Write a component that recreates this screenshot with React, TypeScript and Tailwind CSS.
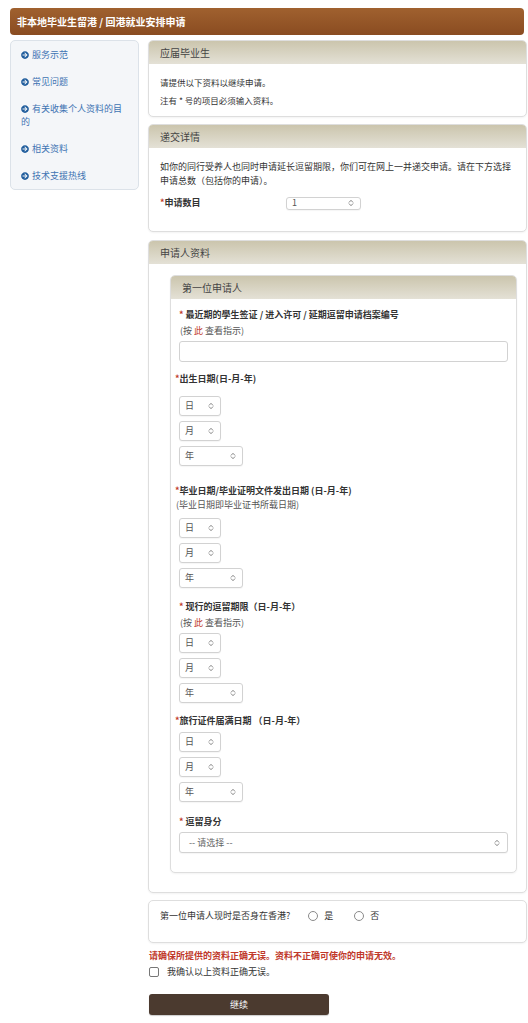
import type { ReactNode } from 'react';
import { FaArrowCircleRight } from 'react-icons/fa';

const sideLinks = ['服务示范', '常见问题', '有关收集个人资料的目的', '相关资料', '技术支援热线'];

function UpDown() {
  return (
    <svg width="6" height="8" viewBox="0 0 6 8" fill="none" stroke="#777" strokeWidth="0.9" strokeLinecap="round" strokeLinejoin="round">
      <path d="M1.2 3.2 L3 1.3 L4.8 3.2" />
      <path d="M1.2 4.8 L3 6.7 L4.8 4.8" />
    </svg>
  );
}

function SelectBox({ label, className }: { label: string; className: string }) {
  return (
    <div className={`flex items-center justify-between rounded-[3px] border border-[#d2d2d2] bg-white pl-[5px] pr-[6px] text-[9px] text-[#555] shadow-[0_1px_1px_rgba(0,0,0,0.04)] ${className}`}>
      <span>{label}</span>
      <UpDown />
    </div>
  );
}

function DateSelects({ className = '' }: { className?: string }) {
  return (
    <div className={`flex flex-col gap-[5px] ${className}`}>
      <SelectBox label="日" className="h-[20px] w-[42px]" />
      <SelectBox label="月" className="h-[20px] w-[42px]" />
      <SelectBox label="年" className="h-[20px] w-[64px]" />
    </div>
  );
}

function Panel({ title, children, className = '' }: { title?: string; children: ReactNode; className?: string }) {
  return (
    <section className={`rounded-[5px] border border-[#dedede] bg-white shadow-[0_1px_2px_rgba(0,0,0,0.05)] ${className}`}>
      {title && (
        <div className="flex h-[23px] items-center rounded-t-[4px] bg-linear-to-b from-[#cbc5ad] to-[#e4e1d6] px-[11px] text-[10px] text-[#444]">
          {title}
        </div>
      )}
      {children}
    </section>
  );
}

function Req() {
  return <span className="text-[#c0392b]">*</span>;
}

function Hint() {
  return (
    <p className="mt-[4px] pl-[1px] text-[9px] leading-[12px] text-[#555]">
      (按 <span className="text-[#c0392b]">此</span> 查看指示)
    </p>
  );
}

export default function App() {
  return (
    <div className="min-h-screen bg-white pl-[10px] pr-[1px] pt-[8px] pb-[8px] font-['Noto_Sans_CJK_SC','Noto_Sans',sans-serif] text-[#333]">
      {/* Kopfzeile */}
      <header className="flex h-[27px] w-[514px] items-center rounded-[4px] bg-linear-to-b from-[#a0612f] to-[#8a4c21] pl-[7px] text-[10px] font-bold text-white">
        非本地毕业生留港 / 回港就业安排申请
      </header>

      <div className="mt-[5px] flex gap-[9px]">
        {/* Seitenleiste */}
        <nav className="w-[129px] self-start rounded-[5px] border border-[#dce2e9] bg-[#f4f6f9] py-[7px] pl-[10px] pr-[12px]">
          <ul className="space-y-[14px]">
            {sideLinks.map((item) => (
              <li key={item} className="text-[9px] leading-[13px] text-[#3f74b3]">
                <FaArrowCircleRight size={8} className="mr-[3px] inline-block align-[-0.5px] text-[#1f5c9c]" />
                {item}
              </li>
            ))}
          </ul>
        </nav>

        <main className="flex flex-1 flex-col">
          <Panel title="应届毕业生">
            <div className="px-[11px] pt-[12px] pb-[10px] text-[8.5px] leading-[12px]">
              <p>请提供以下资料以继续申请。</p>
              <p className="mt-[6px]">注有 * 号的项目必须输入资料。</p>
            </div>
          </Panel>

          <Panel title="递交详情" className="mt-[7px]">
            <div className="px-[11px] pt-[12px] pb-[21px]">
              <p className="text-[9px] leading-[14px]">
                如你的同行受养人也同时申请延长逗留期限，你们可在网上一并递交申请。请在下方选择申请总数（包括你的申请）。
              </p>
              <div className="mt-[8px] flex h-[14px] items-center">
                <span className="w-[126px] text-[9px] font-bold">
                  <Req />申请数目
                </span>
                <SelectBox label="1" className="h-[13px] w-[75px] pr-[5px]" />
              </div>
            </div>
          </Panel>

          <Panel title="申请人资料" className="mt-[8px]">
            <div className="pt-[11px] pb-[19px] pl-[21px] pr-[9px]">
              <Panel title="第一位申请人">
                <div className="px-[8px] pt-[10px] pb-[19px] text-[9px]">
                  <p className="font-bold leading-[12px]">
                    <Req /> 最近期的學生签证 / 进入许可 / 延期逗留申请档案编号
                  </p>
                  <Hint />
                  <div className="mt-[4px] h-[21px] rounded-[3px] border border-[#d2d2d2] bg-white" />

                  <p className="-ml-[4px] mt-[11px] font-bold leading-[12px]">
                    <Req />出生日期(日-月-年)
                  </p>
                  <DateSelects className="mt-[11px]" />

                  <p className="-ml-[4px] mt-[19px] font-bold leading-[12px]">
                    <Req />毕业日期/毕业证明文件发出日期 (日-月-年)
                  </p>
                  <p className="-ml-[3px] mt-[1px] leading-[13px] text-[#555]">(毕业日期即毕业证书所载日期)</p>
                  <DateSelects className="mt-[7px]" />

                  <p className="mt-[13px] font-bold leading-[12px]">
                    <Req /> 现行的逗留期限（日-月-年）
                  </p>
                  <Hint />
                  <DateSelects className="mt-[4px]" />

                  <p className="-ml-[4px] mt-[12px] font-bold leading-[12px]">
                    <Req />旅行证件届满日期 （日-月-年）
                  </p>
                  <DateSelects className="mt-[5px]" />

                  <p className="mt-[14px] font-bold leading-[12px]">
                    <Req /> 逗留身分
                  </p>
                  <SelectBox label="-- 请选择 --" className="mt-[4px] h-[21px] w-full pl-[9px] pr-[7px] text-[#666]" />
                </div>
              </Panel>
            </div>
          </Panel>

          <Panel className="mt-[7px]">
            <div className="flex h-[12px] items-center px-[11px] mt-[9px] mb-[20px] text-[9px]">
              <span>第一位申请人现时是否身在香港?</span>
              <label className="ml-[18px] flex items-center gap-[6px]">
                <span className="h-[10px] w-[10px] rounded-full border border-[#8a8a8a] bg-white" />
                是
              </label>
              <label className="ml-[21px] flex items-center gap-[6px]">
                <span className="h-[10px] w-[10px] rounded-full border border-[#8a8a8a] bg-white" />
                否
              </label>
            </div>
          </Panel>

          <p className="ml-[1px] mt-[7px] text-[9px] font-bold leading-[12px] text-[#c0392b]">
            请确保所提供的资料正确无误。资料不正确可使你的申请无效。
          </p>
          <label className="ml-[1px] mt-[4px] flex h-[12px] items-center gap-[8px] text-[9px]">
            <span className="h-[10px] w-[10px] rounded-[2px] border border-[#777] bg-white" />
            我确认以上资料正确无误。
          </label>

          <button
            type="button"
            className="ml-[1px] mt-[16px] h-[21px] w-[180px] rounded-[3px] bg-[#4b3a2f] text-[9px] text-white shadow-[0_1px_1px_rgba(0,0,0,0.2)]"
          >
            继续
          </button>
        </main>
      </div>
    </div>
  );
}
